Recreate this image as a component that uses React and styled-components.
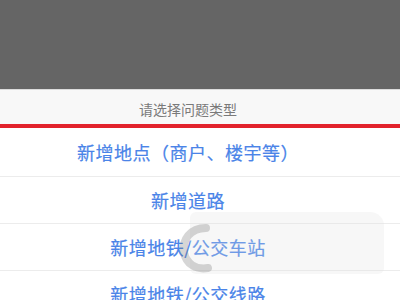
import React from "react";
import styled, { createGlobalStyle } from "styled-components";

const GlobalStyle = createGlobalStyle`
  html, body {
    margin: 0;
    padding: 0;
    background: #ffffff;
  }
  body {
    font-family: "Noto Sans CJK SC", "Noto Sans", sans-serif;
  }
`;

const Screen = styled.div`
  position: relative;
  width: 400px;
  height: 300px;
  overflow: hidden;
  display: flex;
  flex-direction: column;
  background: #ffffff;
`;

const Mask = styled.div`
  height: 89px;
  flex-shrink: 0;
  background: #656565;
  border-bottom: 1px solid #dcdcdc;
`;

const Sheet = styled.div`
  display: flex;
  flex-direction: column;
  background: #ffffff;
`;

// content is centred around x=188, so rows keep 24px extra on the right
const Header = styled.div`
  height: 38px;
  flex-shrink: 0;
  display: flex;
  align-items: center;
  justify-content: center;
  padding: 3px 24px 0 0;
  box-sizing: border-box;
  background: #f8f8f8;
  border-bottom: 4px solid #e2222c;
  color: #7a7a7a;
  font-size: 14px;
`;

const Option = styled.div`
  height: ${(p) => p.$h}px;
  flex-shrink: 0;
  box-sizing: border-box;
  display: flex;
  align-items: center;
  justify-content: center;
  padding-right: 24px;
  border-bottom: 1px solid #ececec;
  color: #4a84e8;
  font-size: 18px;
  letter-spacing: 0.5px;
  -webkit-text-stroke: 0.2px #4a84e8;
`;

const Watermark = styled.div`
  position: absolute;
  left: 176px;
  top: 212px;
  width: 208px;
  height: 62px;
  pointer-events: none;
`;

const WatermarkPlate = styled.div`
  position: absolute;
  left: 14px;
  top: 0;
  right: 0;
  bottom: 0;
  border-radius: 6px 14px 6px 6px;
  background: rgba(225, 225, 225, 0.25);
`;

const WatermarkLogo = styled.svg`
  position: absolute;
  left: 0;
  top: 10px;
`;

const options = [
  { label: "新增地点（商户、楼宇等）", h: 49 },
  { label: "新增道路", h: 47 },
  { label: "新增地铁/公交车站", h: 47 },
  { label: "新增地铁/公交线路", h: 47 },
];

export default function App() {
  return (
    <>
      <GlobalStyle />
      <Screen>
        <Mask />
        <Sheet>
          <Header>请选择问题类型</Header>
          {options.map((o) => (
            <Option key={o.label} $h={o.h}>
              {o.label}
            </Option>
          ))}
        </Sheet>
        <Watermark>
          <WatermarkPlate />
          <WatermarkLogo width="44" height="52" viewBox="0 0 44 52">
            <path
              d="M30 6 C14 6 6 18 8 30 C10 42 20 48 32 46"
              fill="none"
              stroke="rgba(120,120,120,0.3)"
              strokeWidth="8"
              strokeLinecap="round"
            />
          </WatermarkLogo>
        </Watermark>
      </Screen>
    </>
  );
}
